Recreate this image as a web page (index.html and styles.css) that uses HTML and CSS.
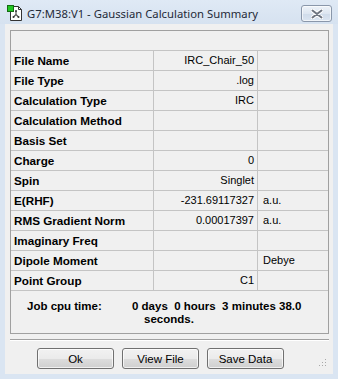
FILE: index.html
```html
<!DOCTYPE html>
<html lang="en">

<head>
	<meta charset="utf-8">
	<title>Gaussian Calculation Summary</title>
	<link rel="stylesheet" href="styles.css">
</head>

<body>
	<div class="vindue">
		<header class="titelbar">
			<svg class="ikon" width="16" height="17" viewBox="0 0 16 17">
				<path d="M3.5 1.5h8l3 3v11h-11z" fill="#fff" stroke="#333" />
				<path d="M11.5 1.5v3h3" fill="none" stroke="#333" />
				<rect x="0.5" y="0.5" width="6" height="6" fill="#22c622" stroke="#136b13" />
				<path d="M9 6v3.5M9 9.5l-2.5 2.5M9 9.5l2.5 2.5" stroke="#555" stroke-width="1.2" fill="none" />
				<circle cx="9" cy="6" r="1" fill="#333" />
				<circle cx="6.5" cy="12" r="1" fill="#333" />
				<circle cx="11.5" cy="12" r="1" fill="#333" />
			</svg>
			<span class="titel">G7:M38:V1 - Gaussian Calculation Summary</span>
			<button class="luk">
				<svg width="12" height="10" viewBox="0 0 12 10">
					<path d="M1.5 1.5l9 7M10.5 1.5l-9 7" stroke="#fff" stroke-width="4" stroke-linecap="round" />
					<path d="M1.5 1.5l9 7M10.5 1.5l-9 7" stroke="#6d7480" stroke-width="2" stroke-linecap="round" />
				</svg>
			</button>
		</header>

		<main class="klient">
			<section class="panel">
				<div class="tabel">
					<div class="celle top"></div>

					<div class="celle navn">File Name</div>
					<div class="celle vaerdi">IRC_Chair_50</div>
					<div class="celle enhed"></div>

					<div class="celle navn">File Type</div>
					<div class="celle vaerdi">.log</div>
					<div class="celle enhed"></div>

					<div class="celle navn">Calculation Type</div>
					<div class="celle vaerdi">IRC</div>
					<div class="celle enhed"></div>

					<div class="celle navn">Calculation Method</div>
					<div class="celle vaerdi"></div>
					<div class="celle enhed"></div>

					<div class="celle navn">Basis Set</div>
					<div class="celle vaerdi"></div>
					<div class="celle enhed"></div>

					<div class="celle navn">Charge</div>
					<div class="celle vaerdi">0</div>
					<div class="celle enhed"></div>

					<div class="celle navn">Spin</div>
					<div class="celle vaerdi">Singlet</div>
					<div class="celle enhed"></div>

					<div class="celle navn">E(RHF)</div>
					<div class="celle vaerdi">-231.69117327</div>
					<div class="celle enhed">a.u.</div>

					<div class="celle navn">RMS Gradient Norm</div>
					<div class="celle vaerdi">0.00017397</div>
					<div class="celle enhed">a.u.</div>

					<div class="celle navn">Imaginary Freq</div>
					<div class="celle vaerdi"></div>
					<div class="celle enhed"></div>

					<div class="celle navn">Dipole Moment</div>
					<div class="celle vaerdi"></div>
					<div class="celle enhed">Debye</div>

					<div class="celle navn">Point Group</div>
					<div class="celle vaerdi">C1</div>
					<div class="celle enhed"></div>
				</div>

				<div class="jobtid">
					<span class="jobnavn">Job cpu time:</span>
					<div class="jobvaerdi">
						<div>0 days&nbsp; 0 hours&nbsp; 3 minutes 38.0</div>
						<div class="linje2">seconds.</div>
					</div>
				</div>
			</section>

			<hr class="skille">

			<nav class="knapper">
				<button class="knap">Ok</button>
				<button class="knap">View File</button>
				<button class="knap">Save Data</button>
			</nav>

			<div class="greb">
				<svg width="8" height="8" viewBox="0 0 8 8">
					<rect x="6" y="0" width="1" height="1" fill="#a8a8a8" />
					<rect x="3" y="3" width="1" height="1" fill="#a8a8a8" />
					<rect x="6" y="3" width="1" height="1" fill="#a8a8a8" />
					<rect x="0" y="6" width="1" height="1" fill="#a8a8a8" />
					<rect x="3" y="6" width="1" height="1" fill="#a8a8a8" />
					<rect x="6" y="6" width="1" height="1" fill="#a8a8a8" />
				</svg>
			</div>
		</main>
	</div>
</body>

</html>
```

FILE: styles.css
```css
* {
	box-sizing: border-box;
}

body {
	margin: 0;
	padding: 0;
	background-color: #d9e4f1;
	font-family: "Liberation Sans", Arial, sans-serif;
}

.vindue {
	width: 338px;
	height: 379px;
	background-color: #dae5f2;
	display: flex;
	flex-direction: column;
}

.titelbar {
	height: 24px;
	display: flex;
	align-items: flex-start;
	padding: 5px 6px 0 7px;
	background: linear-gradient(#dfe9f5, #d6e2f0);
}

.ikon {
	flex: none;
}

.titel {
	margin-left: 4px;
	margin-top: 1px;
	font-family: "Noto Sans", sans-serif;
	font-size: 11.3px;
	line-height: 15px;
	color: #1f2a38;
	white-space: nowrap;
}

.luk {
	margin-left: auto;
	width: 31px;
	height: 17px;
	padding: 0;
	border: 1px solid #8a97aa;
	border-radius: 3px;
	background: linear-gradient(#eef3f9, #dde6f1 50%, #cfdbea 51%, #dbe5f1);
	box-shadow: inset 0 0 0 1px rgba(255, 255, 255, 0.6);
	display: flex;
	align-items: center;
	justify-content: center;
}

.klient {
	position: relative;
	margin: 0 5px;
	height: 350px;
	background-color: #f0f0f0;
	padding: 6px 4px 0 5px;
}

.panel {
	border: 1px solid #a0a0a0;
	height: 304px;
}

.tabel {
	display: grid;
	grid-template-columns: 143px 104px 1fr;
	font-size: 11px;
	color: #000;
}

.celle {
	height: 20px;
	line-height: 19px;
	border-bottom: 1px solid #c4c4c4;
	white-space: nowrap;
}

.top {
	grid-column: 1 / 4;
}

.navn {
	border-right: 1px solid #c4c4c4;
	padding-left: 3px;
	font-weight: bold;
	font-size: 11.7px;
}

.vaerdi {
	border-right: 1px solid #c4c4c4;
	text-align: right;
	padding-right: 3px;
}

.enhed {
	padding-left: 5px;
}

.jobtid {
	display: flex;
	padding: 9px 0 0 16px;
	font-size: 11.5px;
	font-weight: bold;
	line-height: 13px;
}

.jobnavn {
	width: 105px;
}

.jobvaerdi .linje2 {
	padding-left: 12px;
}

.skille {
	margin: 5px 0 0 0;
	border: none;
	border-top: 1px solid #a0a0a0;
	border-bottom: 1px solid #fff;
	height: 0;
}

.knapper {
	display: flex;
	gap: 8px;
	padding: 7px 0 0 27px;
}

.knap {
	width: 77px;
	height: 21px;
	padding: 0;
	border: 1px solid #707070;
	border-radius: 3px;
	background: linear-gradient(#f2f2f2, #ebebeb 50%, #dddddd 51%, #cfcfcf);
	box-shadow: inset 0 0 0 1px rgba(255, 255, 255, 0.7);
	font-family: "Liberation Sans", Arial, sans-serif;
	font-size: 11.5px;
	color: #000;
}

.greb {
	position: absolute;
	right: 6px;
	bottom: 7px;
	line-height: 0;
}
```
